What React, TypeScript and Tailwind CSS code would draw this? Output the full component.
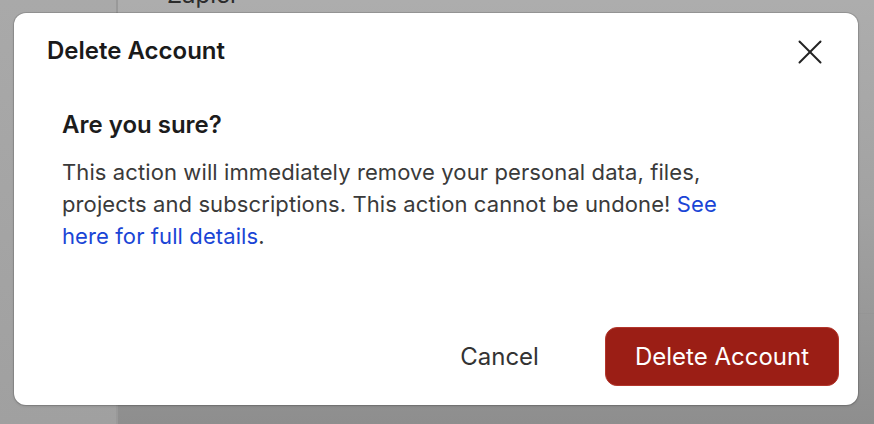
import { X } from 'lucide-react'

export default function App() {
  return (
    <div
      className="relative h-[424px] w-[874px] overflow-hidden"
      style={{ fontFamily: 'Inter, "Noto Sans", sans-serif' }}
    >
      {/* dimmed page behind the dialog */}
      <div className="flex h-full w-full">
        <aside className="h-full w-[118px] border-r-2 border-[#999999] bg-gradient-to-b from-[#a9a9a9] to-[#a0a0a0]" />
        <main className="flex h-full flex-1 flex-col bg-gradient-to-b from-[#adadad] via-[#a2a2a2] to-[#8e8e8e]">
          <div className="mt-[-19px] pl-[49px] text-[24px] leading-[28px] text-[#2b2b2b]">
            Zapier
          </div>
          <div className="mt-[304px] border-b border-[#959595]" />
        </main>
      </div>

      {/* dialog */}
      <div className="absolute left-[14px] top-[13px] flex h-[392px] w-[844px] flex-col rounded-[12px] bg-white shadow-[0_0_0_1px_rgba(0,0,0,0.12),0_1px_3px_rgba(0,0,0,0.15)]">
        <div className="flex items-start justify-between pl-[33px] pr-[27px] pt-[18px]">
          <h1 className="text-[24px] font-semibold leading-10 text-[#1a1a1a]">
            Delete Account
          </h1>
          <button className="flex h-[42px] w-[42px] items-center justify-center text-[#222222]">
            <X size={42} strokeWidth={1.15} />
          </button>
        </div>

        <div className="px-[48px] pt-[36px]">
          <h2 className="text-[24px] font-semibold leading-[32px] text-[#1c1c1c]">
            Are you sure?
          </h2>
          <p className="mt-[15px] max-w-[680px] text-[22px] leading-[32px] tracking-[0.1px] text-[#3a3a3a]">
            This action will immediately remove your personal data, files,
            projects and subscriptions. This action cannot be undone!{' '}
            <a className="text-[#1a45d6]">See here for full details</a>.
          </p>
        </div>

        <div className="mt-auto flex items-center justify-end gap-[36px] pb-[19px] pr-[19px]">
          <button className="h-[59px] rounded-[12px] px-[30px] text-[24px] text-[#333333]">
            Cancel
          </button>
          <button className="h-[59px] rounded-[12px] border border-[#b3362c] bg-[#9b1e15] px-[29px] text-[24px] text-white">
            Delete Account
          </button>
        </div>
      </div>
    </div>
  )
}
